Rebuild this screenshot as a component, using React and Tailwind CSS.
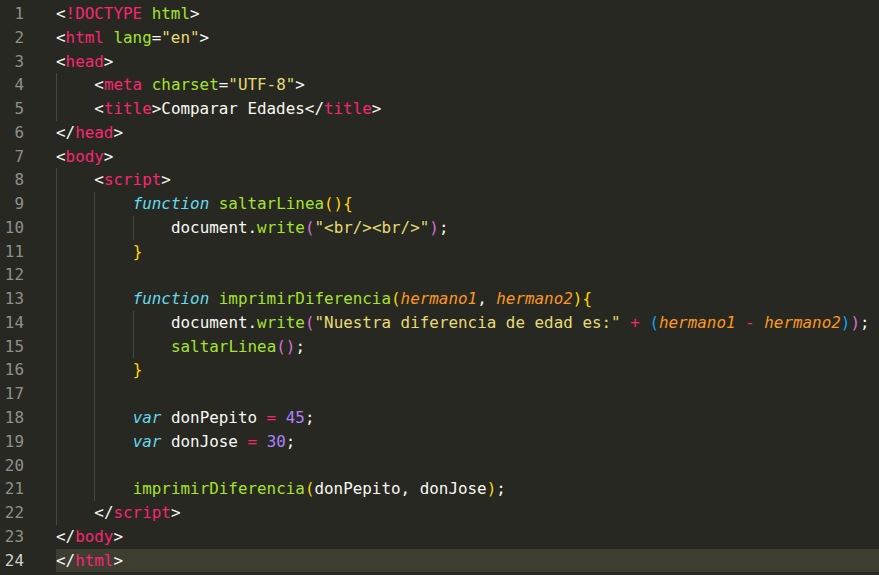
const T = "text-[#f92672]"; // tags / operators
const W = "text-[#f8f8f2]";
const G = "text-[#a6e22e]";
const S = "text-[#e6db74]";
const K = "text-[#66d9ef] italic";
const P = "text-[#fd971f] italic";
const N = "text-[#ae81ff]";
const B1 = "text-[#ffd700]";
const B2 = "text-[#da70d6]";
const B3 = "text-[#179fff]";

// [guides, indent, tokens]
const lines = [
  [0, 0, [["<", W], ["!DOCTYPE", T], [" ", W], ["html", G], [">", W]]],
  [0, 0, [["<", W], ["html", T], [" ", W], ["lang", G], ["=", W], ['"en"', S], [">", W]]],
  [0, 0, [["<", W], ["head", T], [">", W]]],
  [1, 1, [["<", W], ["meta", T], [" ", W], ["charset", G], ["=", W], ['"UTF-8"', S], [">", W]]],
  [1, 1, [["<", W], ["title", T], [">Comparar Edades</", W], ["title", T], [">", W]]],
  [0, 0, [["</", W], ["head", T], [">", W]]],
  [0, 0, [["<", W], ["body", T], [">", W]]],
  [1, 1, [["<", W], ["script", T], [">", W]]],
  [2, 2, [["function", K], [" ", W], ["saltarLinea", G], ["()", B1], ["{", B1]]],
  [3, 3, [["document.", W], ["write", G], ["(", B2], ['"<br/><br/>"', S], [")", B2], [";", W]]],
  [2, 2, [["}", B1]]],
  [2, 0, []],
  [2, 2, [["function", K], [" ", W], ["imprimirDiferencia", G], ["(", B1], ["hermano1", P], [", ", W], ["hermano2", P], [")", B1], ["{", B1]]],
  [3, 3, [["document.", W], ["write", G], ["(", B2], ['"Nuestra diferencia de edad es:"', S], [" ", W], ["+", T], [" ", W], ["(", B3], ["hermano1", P], [" ", W], ["-", T], [" ", W], ["hermano2", P], [")", B3], [")", B2], [";", W]]],
  [3, 3, [["saltarLinea", G], ["()", B2], [";", W]]],
  [2, 2, [["}", B1]]],
  [2, 0, []],
  [2, 2, [["var", K], [" donPepito ", W], ["=", T], [" ", W], ["45", N], [";", W]]],
  [2, 2, [["var", K], [" donJose ", W], ["=", T], [" ", W], ["30", N], [";", W]]],
  [2, 0, []],
  [2, 2, [["imprimirDiferencia", G], ["(", B1], ["donPepito, donJose", W], [")", B1], [";", W]]],
  [1, 1, [["</", W], ["script", T], [">", W]]],
  [0, 0, [["</", W], ["body", T], [">", W]]],
  [0, 0, [["</", W], ["html", T], [">", W]]],
];

export default function App() {
  return (
    <div
      className="h-[575px] w-[879px] overflow-hidden bg-[#272822] pt-[2px] text-[15.9px] leading-[23.78px]"
      style={{ fontFamily: '"DejaVu Sans Mono", "Liberation Mono", monospace' }}
    >
      {lines.map(([guides, indent, tokens], i) => {
        const current = i === lines.length - 1;
        return (
          <div key={i} className="flex h-[23.78px]">
            <div className="w-[56px] shrink-0 pr-[32px] text-right">
              <span className={current ? "text-[#d0d0ca]" : "text-[#90908a]"}>{i + 1}</span>
            </div>
            <div className={`flex flex-1 whitespace-pre ${current ? "bg-[#3e3d32]" : ""}`}>
              {Array.from({ length: Math.max(guides, indent) }).map((_, g) => (
                <div
                  key={g}
                  className={`w-[38.33px] shrink-0 ${g < guides ? "border-l border-[#464741]" : ""}`}
                />
              ))}
              <span>
                {tokens.map(([t, c], j) => (
                  <span key={j} className={c}>
                    {t}
                  </span>
                ))}
              </span>
            </div>
          </div>
        );
      })}
    </div>
  );
}
